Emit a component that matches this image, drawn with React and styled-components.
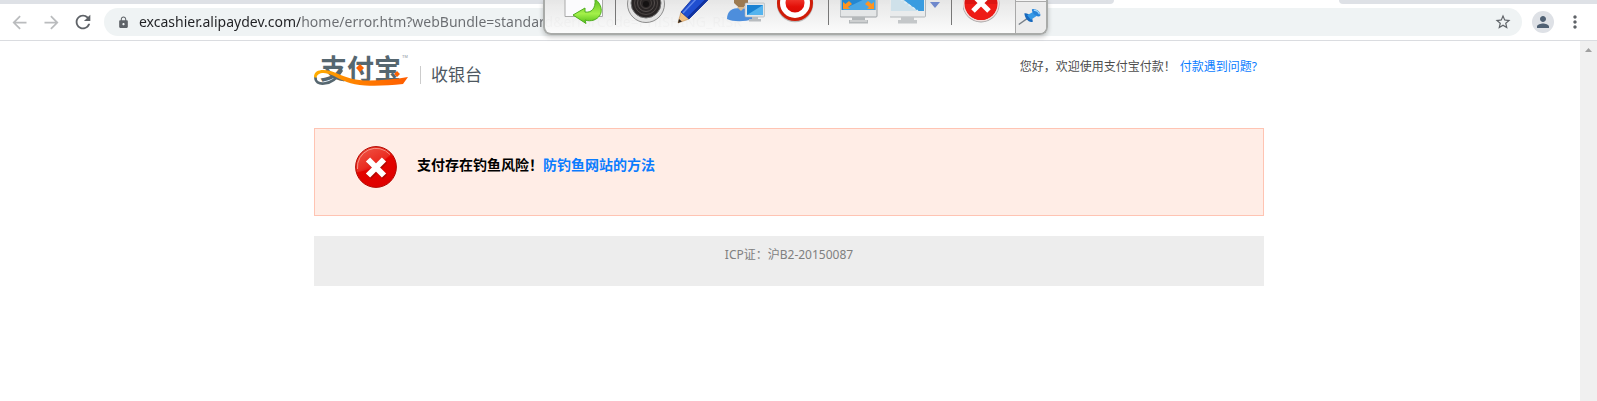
import React from "react";
import styled, { createGlobalStyle } from "styled-components";
import {
  MdArrowBack,
  MdArrowForward,
  MdRefresh,
  MdLock,
  MdStarBorder,
  MdPerson,
  MdMoreVert,
} from "react-icons/md";

const GlobalStyle = createGlobalStyle`
  * { box-sizing: border-box; }
  body {
    margin: 0;
    background: #fff;
    font-family: "Noto Sans", "Noto Sans CJK SC", sans-serif;
    font-size: 12px;
  }
`;

const Window = styled.div`
  position: relative;
  display: flex;
  flex-direction: column;
  min-height: 100vh;
  overflow: hidden;
`;

const TabStrip = styled.div`
  display: flex;
  height: 4px;
  background: #fff;
`;

const TabGroup = styled.div`
  flex: ${(p) => p.$grow};
  background: #dee1e6;
  border-radius: ${(p) => (p.$side === "left" ? "0 0 8px 0" : "0 0 0 8px")};
`;

const ActiveTab = styled.div`
  flex: 225;
`;

const NavBar = styled.nav`
  display: flex;
  align-items: center;
  gap: 10px;
  height: 37px;
  padding: 0 11px 0 8px;
  border-bottom: 1px solid #dadce0;
`;

const IconButton = styled.button`
  display: flex;
  flex: none;
  align-items: center;
  justify-content: center;
  width: ${(p) => p.$width || 22}px;
  height: 22px;
  padding: 0;
  border: 0;
  border-radius: 50%;
  background: ${(p) => (p.$filled ? "#dee1e6" : "none")};
  color: ${(p) => p.$color || "#5f6368"};
`;

const AddressBar = styled.div`
  display: flex;
  flex: 1;
  align-items: center;
  height: 28px;
  padding: 0 10px 0 12px;
  border-radius: 14px;
  background: #eff3f4;
`;

const AddressInput = styled.input`
  flex: 1;
  min-width: 0;
  margin-left: 9px;
  padding: 0;
  border: 0;
  outline: 0;
  font: 14px/20px "Noto Sans", sans-serif;
  color: transparent;
  background: linear-gradient(to right, #202124 161px, #6a6d71 161px);
  background-clip: text;
`;

const Viewport = styled.div`
  display: flex;
  flex: 1;
`;

const Page = styled.div`
  flex: 1;
  padding-right: 2px;
`;

const Container = styled.div`
  max-width: 950px;
  margin: 0 auto;
`;

const Header = styled.header`
  display: flex;
  align-items: flex-start;
  height: 87px;
  padding-top: 13px;
`;

const LogoArt = styled.svg`
  display: block;
  width: 96px;
  height: 33px;
  overflow: visible;
`;

const SiteTitle = styled.h1`
  margin: 12px 0 0 10px;
  padding-left: 10px;
  border-left: 1px solid #ccc;
  font-size: 17px;
  line-height: 18px;
  font-weight: 400;
  color: #4d5760;
`;

const Greeting = styled.p`
  display: flex;
  gap: 4px;
  margin: 4px 7px 0 auto;
  line-height: 18px;
  color: #4d4d4d;
`;

const Link = styled.a`
  color: #0a7cff;
  text-decoration: none;
`;

const Alert = styled.section`
  display: flex;
  gap: 20px;
  height: 88px;
  padding: 17px 40px;
  border: 1px solid #ffc4b3;
  background: #ffede6;
`;

const AlertIcon = styled.svg`
  width: 42px;
  height: 42px;
`;

const AlertText = styled.p`
  margin: 9px 0 0;
  font-size: 14px;
  line-height: 20px;
  font-weight: 700;
  color: #000;
`;

const Footer = styled.footer`
  height: 50px;
  margin-top: 20px;
  padding-top: 10px;
  background: #ededed;
  color: #808080;
  line-height: 18px;
  text-align: center;
`;

const ScrollTrack = styled.div`
  width: 17px;
  background: #f0f0f0;
`;

const ScrollUp = styled.button`
  display: flex;
  align-items: center;
  justify-content: center;
  width: 17px;
  height: 17px;
  padding: 0;
  border: 0;
  background: none;
`;

const CaptureBar = styled.div`
  position: absolute;
  top: 0;
  left: 34%;
  display: flex;
  gap: 10px;
  width: 505px;
  height: 35px;
  padding-left: 19px;
  border: solid #a9aba9;
  border-width: 0 2px 2px;
  border-radius: 0 0 8px 8px;
  background: linear-gradient(rgba(230, 230, 230, 0.96), rgba(252, 252, 252, 0.96));
  box-shadow: 0 2px 5px rgba(0, 0, 0, 0.22);
`;

const ToolButton = styled.button`
  flex: none;
  width: ${(p) => p.$width || 40}px;
  height: 26px;
  padding: 0;
  border: 0;
  background: none;

  svg {
    display: block;
    width: 100%;
    height: 100%;
  }
`;

const Separator = styled.div`
  flex: none;
  width: 1px;
  height: 25px;
  margin: 0 1px;
  background: #777;
`;

const PinPanel = styled.div`
  width: 31px;
  margin-left: auto;
  padding-top: 4px;
  border-left: 1px solid #a8a8a8;
  background: linear-gradient(#f4f4f4 1px, #aaa 1px, #aaa 2px, #ececec 2px);
  border-radius: 0 0 6px 0;
`;

function Logo() {
  return (
    <LogoArt viewBox="0 0 96 33" role="img" aria-label="支付宝">
      <defs>
        <linearGradient id="swoosh" x1="0" x2="1">
          <stop offset="0" stopColor="#ffae00" />
          <stop offset="0.4" stopColor="#ff8400" />
          <stop offset="1" stopColor="#ff5c00" />
        </linearGradient>
      </defs>
      <text
        x="6"
        y="25"
        fontFamily="Noto Sans CJK SC, sans-serif"
        fontSize="27"
        fontWeight="700"
        fill="#566770"
      >
        支付宝
      </text>
      <path
        d="M1.500 23 C1 28 5 30 10 29.500 C18 29 24 23 28 16"
        fill="none"
        stroke="#566770"
        strokeWidth="2.600"
      />
      <path
        d="M0 23 C0 14 13 15 22 19 C33 24 42 26.500 54 26.500 C68 26.500 82 25 94 23 L89 30 C76 31.500 63 32 51 31.500 C36 31 28 26 19 21.500 C11 17.500 3 18 2.500 24 Z"
        fill="url(#swoosh)"
      />
      <path d="M46 10 L50 14 L46 18 L42 14 Z M83 17 L86 20 L83 23 L80 20 Z" fill="#ff6200" />
      <text x="88" y="4" fontFamily="Liberation Sans, sans-serif" fontSize="4" fill="#889299">
        TM
      </text>
    </LogoArt>
  );
}

function ErrorIcon() {
  return (
    <AlertIcon viewBox="0 0 42 42" aria-hidden="true">
      <defs>
        <linearGradient id="err" x1="0" y1="0" x2="0.5" y2="1">
          <stop offset="0" stopColor="#ee4a38" />
          <stop offset="0.5" stopColor="#e81408" />
          <stop offset="0.55" stopColor="#e20400" />
          <stop offset="1" stopColor="#e00000" />
        </linearGradient>
      </defs>
      <circle cx="21" cy="21" r="20.4" fill="url(#err)" stroke="#b40a04" />
      <path d="M2.5 23 A18.7 18.7 0 0 1 35 8.500" fill="none" stroke="#f58a7c" strokeWidth="1" />
      <path d="M2 26 C12 25 25 20 35 9 A19 19 0 0 0 2 26Z" fill="#fff" opacity="0.1" />
      <path d="M14 15 L30 31 M30 15 L14 31" stroke="#8e0c04" strokeWidth="6" opacity="0.55" />
      <path d="M13 13.500 L29 29.500 M29 13.500 L13 29.500" stroke="#fff" strokeWidth="6" />
    </AlertIcon>
  );
}

function UndoIcon() {
  return (
    <svg viewBox="0 0 40 26" aria-hidden="true">
      <defs>
        <linearGradient id="green" x1="0" y1="0" x2="0" y2="1">
          <stop offset="0" stopColor="#5fbf20" />
          <stop offset="0.6" stopColor="#a4f04a" />
          <stop offset="1" stopColor="#55c018" />
        </linearGradient>
      </defs>
      <path d="M1 -2 V16.500 H38.500 V-2" fill="#fbfbfd" stroke="#aaa" />
      <path
        d="M31 -1 C39 5 40 16 30 20 C27 21 24 21 21 20 L22 23.500 L9 15 L21 8 V12 C27 13 32 9 31 -1Z"
        fill="url(#green)"
        stroke="#4fae1e"
      />
    </svg>
  );
}

function LensIcon() {
  return (
    <svg viewBox="0 0 40 26" aria-hidden="true">
      <circle cx="19" cy="4" r="18.500" fill="#e2e2e2" stroke="#8c8c8c" />
      <circle cx="19" cy="3" r="15" fill="#292525" stroke="#777" />
      <circle cx="19" cy="3" r="11.500" fill="none" stroke="#4d4745" />
      <circle cx="19" cy="3" r="8.500" fill="none" stroke="#575150" />
      <circle cx="19" cy="3" r="5.500" fill="none" stroke="#4a4442" />
      <circle cx="19" cy="4" r="3" fill="#141212" />
    </svg>
  );
}

function PencilIcon() {
  return (
    <svg viewBox="0 0 40 26" aria-hidden="true">
      <path d="M1 23 L4 12 L12 19Z" fill="#f2c184" stroke="#b57c3c" strokeWidth="0.5" />
      <path d="M1 23 L2 19 L5 21.500Z" fill="#2a2320" />
      <path d="M4 12 L17 -3 H34 L12 19Z" fill="#1f4ed0" stroke="#0d2c96" strokeWidth="0.8" />
      <path d="M6 13 L20 -2" stroke="#5f86ea" strokeWidth="1.500" />
      <path d="M11 18 L31 -2" stroke="#10309c" strokeWidth="2" />
    </svg>
  );
}

function RemoteUserIcon() {
  return (
    <svg viewBox="0 0 40 26" aria-hidden="true">
      <path d="M0 19 C0 11 5 8 13 8 C22 8 26 12 26 19 C18 22 6 22 0 19Z" fill="#4d8edc" />
      <path d="M7 -1 H21 V3 L14 9.500 L7 3Z" fill="#9c7a50" />
      <path d="M10 7 L14 11 L18 7Z" fill="#d8b88c" />
      <rect x="18" y="3" width="19.500" height="14" rx="1" fill="#e2e6e8" stroke="#a9b0b4" strokeWidth="0.6" />
      <rect x="20" y="5" width="16" height="10" fill="#1a82d2" />
      <path d="M20 15 L36 5 V15Z" fill="#55b4ee" />
      <path d="M25 17 H31 V19 H34 V21.500 H22 V19 H25Z" fill="#b8bcbf" />
    </svg>
  );
}

function RecordIcon() {
  return (
    <svg viewBox="0 0 40 26" aria-hidden="true">
      <defs>
        <linearGradient id="record" x1="0" y1="0" x2="0" y2="1">
          <stop offset="0.3" stopColor="#f0362c" />
          <stop offset="0.7" stopColor="#e30f08" />
          <stop offset="1" stopColor="#d80c06" />
        </linearGradient>
      </defs>
      <circle cx="18" cy="4" r="18.300" fill="#bcbcbc" />
      <circle cx="18" cy="3" r="18" fill="#cf1c08" />
      <circle cx="18" cy="3" r="15" fill="#fff" />
      <circle cx="18" cy="3" r="9.500" fill="url(#record)" />
    </svg>
  );
}

function FullScreenIcon() {
  return (
    <svg viewBox="0 0 40 26" aria-hidden="true">
      <rect x="0" y="-10" width="37" height="27" rx="1" fill="#e4e6e7" stroke="#9ea2a5" />
      <rect x="1.500" y="-8" width="34" height="18" fill="#2387d1" />
      <path d="M2 10 L35 -6 V10Z" fill="#49a6e4" />
      <path d="M3 9 V2 L5.500 4 L9 1 L12 4 L8 7 L10 9Z M34 9 V2 L31.500 4 L28 1 L25 4 L29 7 L27 9Z" fill="#ff9420" />
      <path d="M12 17 H25 V20 H28 V23.500 H9 V20 H12Z" fill="#b4b8ba" />
      <path d="M10 21 H27" stroke="#e6e6e6" />
    </svg>
  );
}

function RegionIcon() {
  return (
    <svg viewBox="0 0 50 26" aria-hidden="true">
      <rect x="-0.500" y="-10" width="36" height="27" rx="1" fill="#e9ebec" stroke="#b3b7ba" />
      <rect x="1" y="-8" width="33" height="19" fill="#cfe1ea" />
      <path d="M10 -3 H34 V11 H28Z" fill="#3a9ce0" />
      <path d="M10 -1 L28 11" stroke="#d9edf8" strokeDasharray="3 2" strokeWidth="1.500" />
      <path d="M11 17 H24 V20 H27 V23.500 H8 V20 H11Z" fill="#c4c7c9" />
      <path d="M40 2 H50 L45 8Z" fill="#6f88cc" />
    </svg>
  );
}

function CloseIcon() {
  return (
    <svg viewBox="0 0 40 26" aria-hidden="true">
      <circle cx="18" cy="4" r="18.500" fill="#a5a5a5" />
      <circle cx="18" cy="3.500" r="18" fill="#f3dcda" />
      <circle cx="18" cy="3.500" r="16.500" fill="#dc1512" />
      <path d="M2 4 H34 A16 16 0 0 1 2 4Z" fill="#ee1b16" />
      <path d="M10 -5 L26 11 M26 -5 L10 11" stroke="#fff" strokeWidth="5" />
    </svg>
  );
}

function PinIcon() {
  return (
    <svg viewBox="0 0 30 26" aria-hidden="true">
      <path d="M3 21 L13 14" stroke="#777f88" strokeWidth="1.500" />
      <path d="M9 9 C13 8 18 13 18 18 C14 20 9 14 9 9Z" fill="#1768bd" />
      <path d="M12 11 L19 7 L22 12 L16 16Z" fill="#3599e6" />
      <path d="M17 5 C21 3 27 8 26 12 C22 14 17 9 17 5Z" fill="#2583d8" />
      <path d="M19 6 C21 5 25 8 25 10" fill="none" stroke="#9ed5fa" strokeWidth="1.500" />
    </svg>
  );
}

export default function App() {
  return (
    <>
      <GlobalStyle />
      <Window>
        <TabStrip>
          <TabGroup $grow={1114} $side="left" />
          <ActiveTab />
          <TabGroup $grow={258} $side="right" />
        </TabStrip>
        <NavBar>
          <IconButton aria-label="后退" $color="#babcbe">
            <MdArrowBack size={21} />
          </IconButton>
          <IconButton aria-label="前进" $color="#babcbe">
            <MdArrowForward size={21} />
          </IconButton>
          <IconButton aria-label="重新加载">
            <MdRefresh size={22} />
          </IconButton>
          <AddressBar>
            <IconButton aria-label="网站信息" $width={14}>
              <MdLock size={13} />
            </IconButton>
            <AddressInput
              aria-label="地址"
              spellCheck={false}
              defaultValue="excashier.alipaydev.com/home/error.htm?webBundle=standard&errorCode=PHISHING_RISK"
            />
            <IconButton aria-label="收藏" $width={18}>
              <MdStarBorder size={18} />
            </IconButton>
          </AddressBar>
          <IconButton aria-label="个人资料" $filled $color="#4f6073">
            <MdPerson size={18} />
          </IconButton>
          <IconButton aria-label="菜单">
            <MdMoreVert size={20} />
          </IconButton>
        </NavBar>

        <Viewport>
          <Page>
            <Container>
              <Header>
                <Logo />
                <SiteTitle>收银台</SiteTitle>
                <Greeting>
                  <span>您好，欢迎使用支付宝付款！</span>
                  <Link href="#help">付款遇到问题?</Link>
                </Greeting>
              </Header>
              <Alert>
                <ErrorIcon />
                <AlertText>
                  支付存在钓鱼风险！<Link href="#phishing">防钓鱼网站的方法</Link>
                </AlertText>
              </Alert>
              <Footer>ICP证：沪B2-20150087</Footer>
            </Container>
          </Page>
          <ScrollTrack>
            <ScrollUp aria-label="向上滚动">
              <svg width="7" height="4" viewBox="0 0 7 4" aria-hidden="true">
                <path d="M0 4 L3.500 0 L7 4Z" fill="#a0a0a0" />
              </svg>
            </ScrollUp>
          </ScrollTrack>
        </Viewport>

        <CaptureBar role="toolbar" aria-label="截图工具">
          <ToolButton aria-label="返回"><UndoIcon /></ToolButton>
          <Separator />
          <ToolButton aria-label="拍照"><LensIcon /></ToolButton>
          <ToolButton aria-label="画笔"><PencilIcon /></ToolButton>
          <ToolButton aria-label="远程用户"><RemoteUserIcon /></ToolButton>
          <ToolButton aria-label="录制"><RecordIcon /></ToolButton>
          <Separator />
          <ToolButton aria-label="全屏"><FullScreenIcon /></ToolButton>
          <ToolButton aria-label="区域" $width={50}><RegionIcon /></ToolButton>
          <Separator />
          <ToolButton aria-label="关闭"><CloseIcon /></ToolButton>
          <PinPanel>
            <ToolButton aria-label="固定" $width={28}><PinIcon /></ToolButton>
          </PinPanel>
        </CaptureBar>
      </Window>
    </>
  );
}
